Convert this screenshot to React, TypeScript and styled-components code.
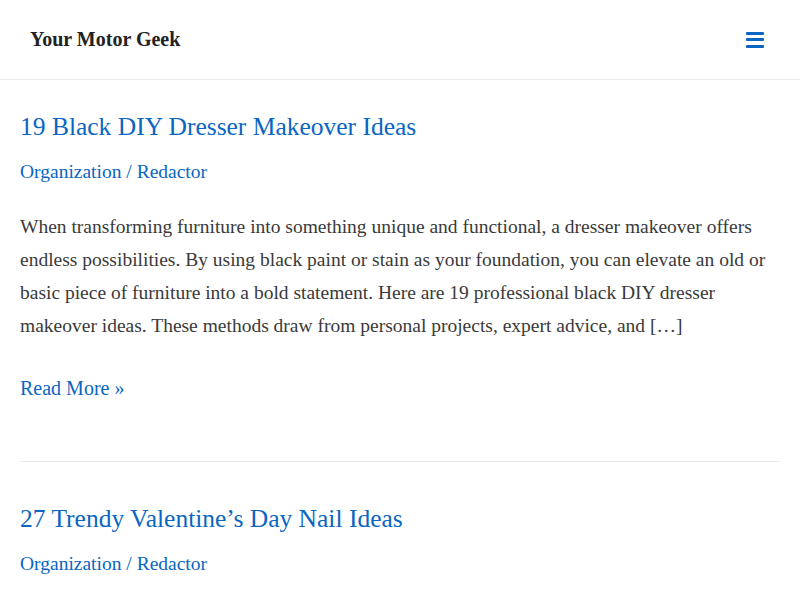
import React from "react";
import styled, { createGlobalStyle } from "styled-components";

const Global = createGlobalStyle`
  html, body { margin: 0; padding: 0; background: #ffffff; }
  body { font-family: "Liberation Serif", "Times New Roman", serif; color: #3a3a3a; }
  * { box-sizing: border-box; }
`;

const LINK = "#0a66c2";

const Header = styled.header`
  height: 80px;
  border-bottom: 1px solid #eaeaea;
  display: flex;
  align-items: center;
  justify-content: space-between;
  padding: 0 35px 0 30px;
`;

const Logo = styled.a`
  font-family: "Liberation Serif", "Times New Roman", serif;
  font-weight: 700;
  font-size: 20px;
  color: #222222;
  text-decoration: none;
`;

const MenuButton = styled.button`
  border: none;
  background: transparent;
  padding: 0;
  width: 20px;
  height: 16px;
  display: flex;
  flex-direction: column;
  justify-content: space-between;
  align-items: center;
  cursor: pointer;
`;

const Bar = styled.span`
  display: block;
  width: 18px;
  height: 3px;
  border-radius: 1px;
  background: ${LINK};
`;

const Main = styled.main`
  padding: 0 20px;
`;

const Article = styled.article<{ $first?: boolean }>`
  padding-top: ${(p) => (p.$first ? "31px" : "41px")};
  padding-bottom: 54px;
  border-bottom: 1px solid #e4e7ee;
`;

const Title = styled.h2`
  margin: 0;
  font-size: 25.5px;
  line-height: 31.2px;
  font-weight: 400;
  a { color: ${LINK}; text-decoration: none; }
`;

const Meta = styled.div`
  margin-top: 13px;
  font-size: 19.5px;
  line-height: 33.3px;
  color: ${LINK};
  a { color: ${LINK}; text-decoration: none; }
`;

const Excerpt = styled.p`
  margin: 21px 0 0;
  font-size: 19.5px;
  line-height: 33.3px;
  color: #3a3a3a;
`;

const ReadMore = styled.a`
  display: block;
  margin-top: 27px;
  font-size: 20px;
  line-height: 37px;
  color: ${LINK};
  text-decoration: none;
`;

export default function App() {
  return (
    <>
      <Global />
      <Header>
        <Logo href="#">Your Motor Geek</Logo>
        <MenuButton aria-label="Menu">
          <Bar />
          <Bar />
          <Bar />
        </MenuButton>
      </Header>
      <Main>
        <Article $first>
          <Title>
            <a href="#">19 Black DIY Dresser Makeover Ideas</a>
          </Title>
          <Meta>
            <a href="#">Organization</a> / <a href="#">Redactor</a>
          </Meta>
          <Excerpt>
            When transforming furniture into something unique and functional, a dresser makeover offers
            endless possibilities. By using black paint or stain as your foundation, you can elevate an old or
            basic piece of furniture into a bold statement. Here are 19 professional black DIY dresser
            makeover ideas. These methods draw from personal projects, expert advice, and […]
          </Excerpt>
          <ReadMore href="#">Read More »</ReadMore>
        </Article>
        <Article>
          <Title>
            <a href="#">27 Trendy Valentine’s Day Nail Ideas</a>
          </Title>
          <Meta>
            <a href="#">Organization</a> / <a href="#">Redactor</a>
          </Meta>
        </Article>
      </Main>
    </>
  );
}
